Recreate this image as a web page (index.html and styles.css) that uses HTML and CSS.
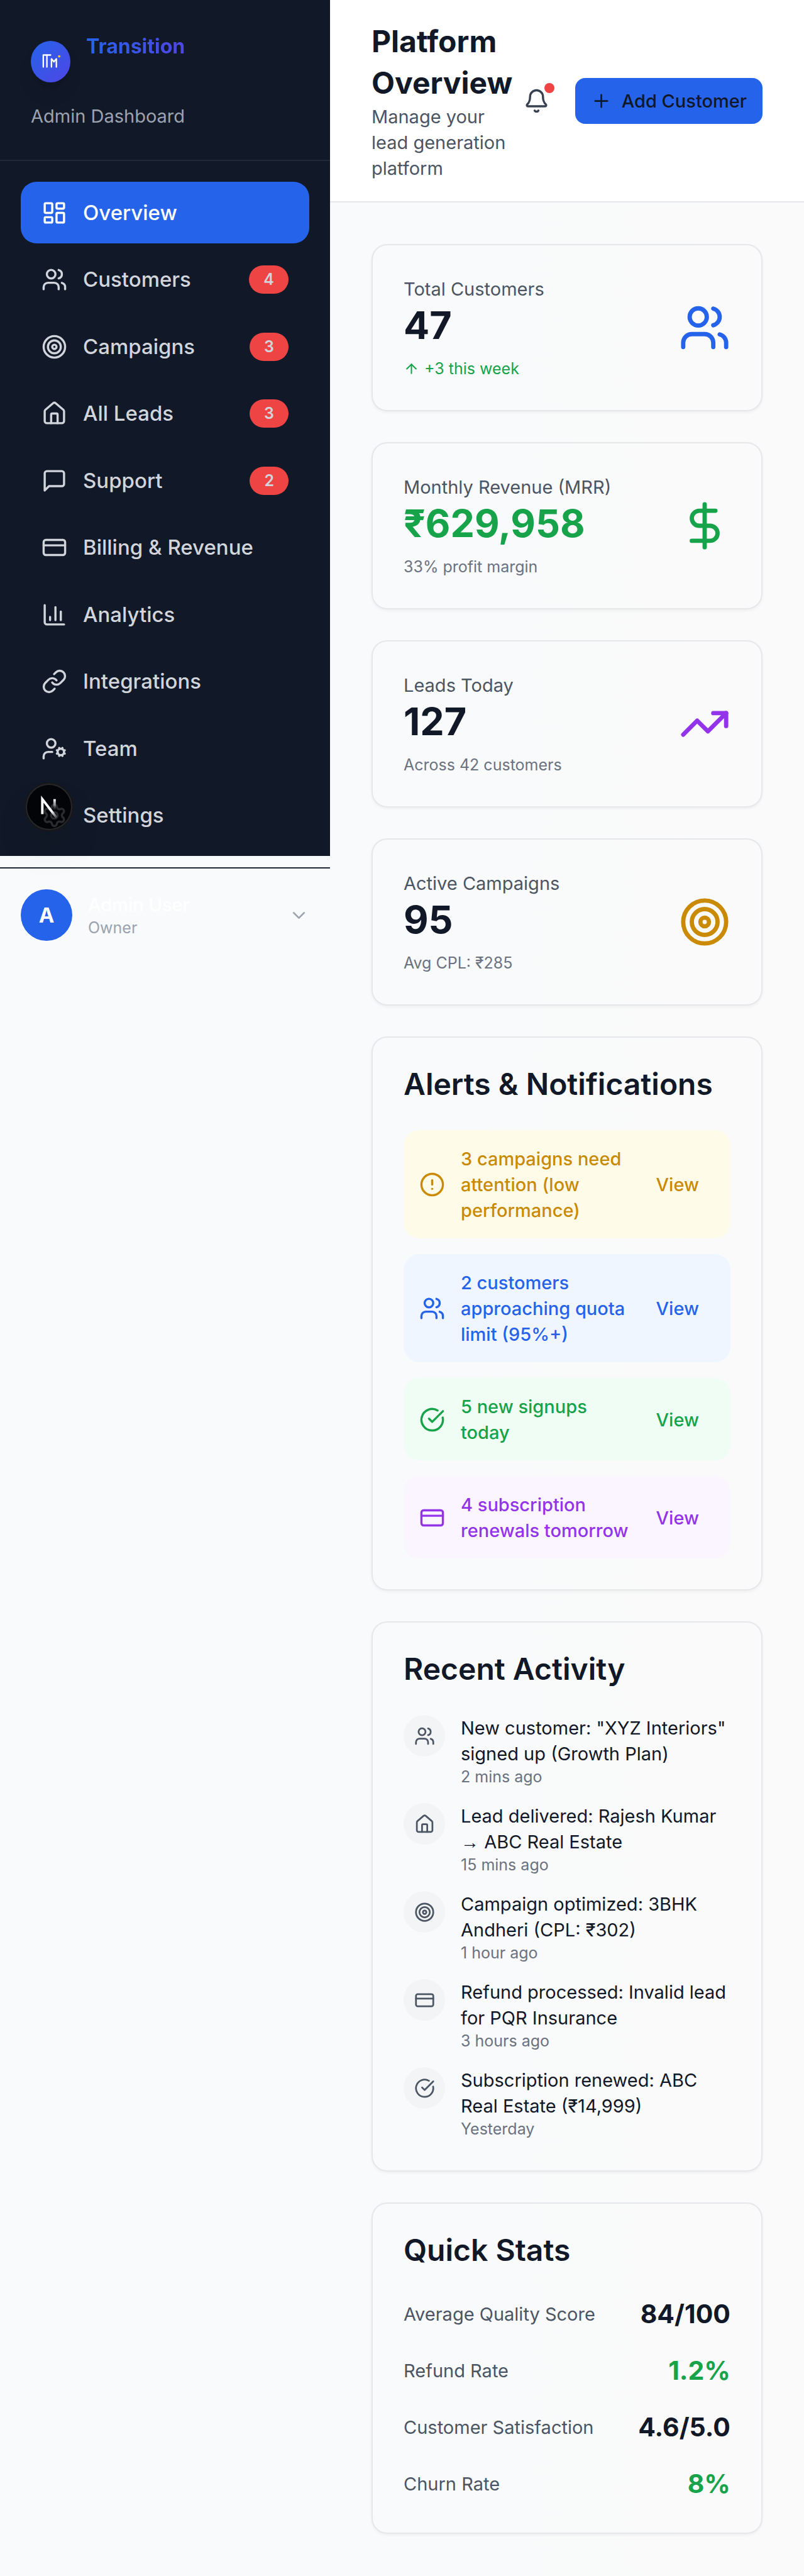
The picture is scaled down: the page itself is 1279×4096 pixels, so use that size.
FILE: index.html
```html
<!DOCTYPE html>
<html lang="en">
<head>
<meta charset="utf-8">
<meta name="viewport" content="width=device-width, initial-scale=1">
<title>Platform Overview</title>
<link rel="stylesheet" href="styles.css">
</head>
<body>
<svg class="sprite" aria-hidden="true">
  <symbol id="dashboard" viewBox="0 0 24 24"><rect x="3" y="3" width="7" height="9" rx="1"/><rect x="14" y="3" width="7" height="5" rx="1"/><rect x="14" y="12" width="7" height="9" rx="1"/><rect x="3" y="16" width="7" height="5" rx="1"/></symbol>
  <symbol id="users" viewBox="0 0 24 24"><path d="M16 21v-2a4 4 0 0 0-4-4H6a4 4 0 0 0-4 4v2"/><path d="M16 3.128a4 4 0 0 1 0 7.744"/><path d="M22 21v-2a4 4 0 0 0-3-3.87"/><circle cx="9" cy="7" r="4"/></symbol>
  <symbol id="target" viewBox="0 0 24 24"><circle cx="12" cy="12" r="10"/><circle cx="12" cy="12" r="6"/><circle cx="12" cy="12" r="2"/></symbol>
  <symbol id="house" viewBox="0 0 24 24"><path d="M15 21v-8a1 1 0 0 0-1-1h-4a1 1 0 0 0-1 1v8"/><path d="M3 10a2 2 0 0 1 .709-1.528l7-5.999a2 2 0 0 1 2.582 0l7 5.999A2 2 0 0 1 21 10v9a2 2 0 0 1-2 2H5a2 2 0 0 1-2-2z"/></symbol>
  <symbol id="message" viewBox="0 0 24 24"><path d="M21 15a2 2 0 0 1-2 2H7l-4 4V5a2 2 0 0 1 2-2h14a2 2 0 0 1 2 2z"/></symbol>
  <symbol id="card" viewBox="0 0 24 24"><rect x="2" y="5" width="20" height="14" rx="2"/><path d="M2 10h20"/></symbol>
  <symbol id="chart" viewBox="0 0 24 24"><path d="M3 3v16a2 2 0 0 0 2 2h16"/><path d="M18 17V9"/><path d="M13 17V5"/><path d="M8 17v-3"/></symbol>
  <symbol id="link" viewBox="0 0 24 24"><path d="M10 13a5 5 0 0 0 7.54.54l3-3a5 5 0 0 0-7.07-7.07l-1.72 1.71"/><path d="M14 11a5 5 0 0 0-7.54-.54l-3 3a5 5 0 0 0 7.07 7.07l1.71-1.71"/></symbol>
  <symbol id="user-cog" viewBox="0 0 24 24"><path d="M10 15H6a4 4 0 0 0-4 4v2"/><path d="m14.305 16.53.923-.382"/><path d="m15.228 13.852-.923-.383"/><path d="m16.852 12.228-.383-.923"/><path d="m16.852 17.772-.383.924"/><path d="m19.148 12.228.383-.923"/><path d="m19.53 18.696-.382-.924"/><path d="m20.772 13.852.924-.383"/><path d="m20.772 16.148.924.383"/><circle cx="18" cy="15" r="3"/><circle cx="9" cy="7" r="4"/></symbol>
  <symbol id="settings" viewBox="0 0 24 24"><path d="M9.671 4.136a2.34 2.34 0 0 1 4.659 0 2.34 2.34 0 0 0 3.319 1.915 2.34 2.34 0 0 1 2.33 4.033 2.34 2.34 0 0 0 0 3.831 2.34 2.34 0 0 1-2.33 4.033 2.34 2.34 0 0 0-3.319 1.915 2.34 2.34 0 0 1-4.659 0 2.34 2.34 0 0 0-3.32-1.915 2.34 2.34 0 0 1-2.33-4.033 2.34 2.34 0 0 0 0-3.831A2.34 2.34 0 0 1 6.35 6.051a2.34 2.34 0 0 0 3.319-1.915"/><circle cx="12" cy="12" r="3"/></symbol>
  <symbol id="bell" viewBox="0 0 24 24"><path d="M10.268 21a2 2 0 0 0 3.464 0"/><path d="M3.262 15.326A1 1 0 0 0 4 17h16a1 1 0 0 0 .74-1.673C19.41 13.956 18 12.499 18 8A6 6 0 0 0 6 8c0 4.499-1.411 5.956-2.738 7.326"/></symbol>
  <symbol id="plus" viewBox="0 0 24 24"><path d="M5 12h14"/><path d="M12 5v14"/></symbol>
  <symbol id="arrow-up" viewBox="0 0 24 24"><path d="m5 12 7-7 7 7"/><path d="M12 19V5"/></symbol>
  <symbol id="dollar" viewBox="0 0 24 24"><path d="M12 2v20"/><path d="M17 5H9.5a3.5 3.5 0 0 0 0 7h5a3.5 3.5 0 0 1 0 7H6"/></symbol>
  <symbol id="trending" viewBox="0 0 24 24"><path d="M16 7h6v6"/><path d="m22 7-8.5 8.5-5-5L2 17"/></symbol>
  <symbol id="alert" viewBox="0 0 24 24"><circle cx="12" cy="12" r="10"/><path d="M12 8v4"/><path d="M12 16h.01"/></symbol>
  <symbol id="check" viewBox="0 0 24 24"><path d="M21.801 10A10 10 0 1 1 17 3.335"/><path d="m9 11 3 3L22 4"/></symbol>
  <symbol id="chevron" viewBox="0 0 24 24"><path d="m6 9 6 6 6-6"/></symbol>
</svg>

<div class="layout">
  <aside class="sidebar">
    <div class="brand">
      <div class="brand-row">
        <span class="brand-logo">
          <svg viewBox="0 0 92 96" aria-hidden="true"><g fill="none" stroke="#fff" stroke-width="3.4" stroke-linecap="round" stroke-linejoin="round"><path d="M29 60.5V32.7H46"/><path d="M37.4 33V60.5"/><path d="M48 60.5V41.5L53.7 48.4L59.4 41.5V60.5"/></g><circle cx="66" cy="35.7" r="2.8" fill="#facc15"/></svg>
        </span>
        <span class="brand-name">Transition</span>
      </div>
      <p class="brand-sub">Admin Dashboard</p>
    </div>
    <nav class="nav" aria-label="Main">
      <a class="nav-item active" href="#" aria-current="page"><svg class="icon"><use href="#dashboard"/></svg>Overview</a>
      <a class="nav-item" href="#"><svg class="icon"><use href="#users"/></svg>Customers<span class="badge">4</span></a>
      <a class="nav-item" href="#"><svg class="icon"><use href="#target"/></svg>Campaigns<span class="badge">3</span></a>
      <a class="nav-item" href="#"><svg class="icon"><use href="#house"/></svg>All Leads<span class="badge">3</span></a>
      <a class="nav-item" href="#"><svg class="icon"><use href="#message"/></svg>Support<span class="badge">2</span></a>
      <a class="nav-item" href="#"><svg class="icon"><use href="#card"/></svg>Billing &amp; Revenue</a>
      <a class="nav-item" href="#"><svg class="icon"><use href="#chart"/></svg>Analytics</a>
      <a class="nav-item" href="#"><svg class="icon"><use href="#link"/></svg>Integrations</a>
      <a class="nav-item" href="#"><svg class="icon"><use href="#user-cog"/></svg>Team</a>
      <a class="nav-item" href="#"><svg class="icon"><use href="#settings"/></svg>Settings</a>
    </nav>
    <button class="profile" type="button">
      <span class="avatar">A</span>
      <span class="profile-text"><span class="profile-name">Admin User</span><span class="profile-role">Owner</span></span>
      <svg class="icon icon-sm"><use href="#chevron"/></svg>
    </button>
    <button class="dev-badge" type="button" aria-label="Developer tools">
      <svg viewBox="0 0 36 36" fill="none" aria-hidden="true">
        <defs>
          <linearGradient id="fade-diagonal" gradientUnits="userSpaceOnUse" x1="20" y1="21" x2="24.6" y2="27"><stop stop-color="#fff"/><stop offset="0.6" stop-color="#fff" stop-opacity="0.5"/><stop offset="1" stop-color="#fff" stop-opacity="0"/></linearGradient>
          <linearGradient id="fade-stem" gradientUnits="userSpaceOnUse" x1="22" y1="12" x2="22" y2="20.5"><stop stop-color="#fff"/><stop offset="1" stop-color="#fff" stop-opacity="0"/></linearGradient>
        </defs>
        <path d="M23.7 26.2 12.8 12v11.6" stroke="url(#fade-diagonal)" stroke-width="1.9"/>
        <path d="M22.3 12v11.6" stroke="url(#fade-stem)" stroke-width="1.9"/>
      </svg>
    </button>
  </aside>

  <div class="page">
    <header class="topbar">
      <div class="topbar-text">
        <h1>Platform Overview</h1>
        <p>Manage your lead generation platform</p>
      </div>
      <button class="bell" type="button" aria-label="Notifications"><svg class="icon"><use href="#bell"/></svg><span class="dot"></span></button>
      <button class="add" type="button"><svg class="icon icon-sm"><use href="#plus"/></svg>Add Customer</button>
    </header>

    <main class="content">
      <section class="card stat">
        <div><h3>Total Customers</h3><p class="stat-value">47</p><p class="stat-note green"><svg class="icon icon-xs"><use href="#arrow-up"/></svg>+3 this week</p></div>
        <svg class="icon icon-lg blue"><use href="#users"/></svg>
      </section>
      <section class="card stat">
        <div><h3>Monthly Revenue (MRR)</h3><p class="stat-value green">₹629,958</p><p class="stat-note">33% profit margin</p></div>
        <svg class="icon icon-lg green"><use href="#dollar"/></svg>
      </section>
      <section class="card stat">
        <div><h3>Leads Today</h3><p class="stat-value">127</p><p class="stat-note">Across 42 customers</p></div>
        <svg class="icon icon-lg purple"><use href="#trending"/></svg>
      </section>
      <section class="card stat">
        <div><h3>Active Campaigns</h3><p class="stat-value">95</p><p class="stat-note">Avg CPL: ₹285</p></div>
        <svg class="icon icon-lg yellow"><use href="#target"/></svg>
      </section>

      <section class="card">
        <h2>Alerts &amp; Notifications</h2>
        <ul class="list">
          <li class="alert alert-yellow yellow"><svg class="icon"><use href="#alert"/></svg><span class="alert-text">3 campaigns need attention (low performance)</span><button class="view" type="button">View</button></li>
          <li class="alert alert-blue blue"><svg class="icon"><use href="#users"/></svg><span class="alert-text">2 customers approaching quota limit (95%+)</span><button class="view" type="button">View</button></li>
          <li class="alert alert-green green"><svg class="icon"><use href="#check"/></svg><span class="alert-text">5 new signups today</span><button class="view" type="button">View</button></li>
          <li class="alert alert-purple purple"><svg class="icon"><use href="#card"/></svg><span class="alert-text">4 subscription renewals tomorrow</span><button class="view" type="button">View</button></li>
        </ul>
      </section>

      <section class="card">
        <h2>Recent Activity</h2>
        <ul class="list">
          <li class="activity"><span class="bubble"><svg class="icon icon-sm"><use href="#users"/></svg></span><div><p>New customer: "XYZ Interiors" signed up (Growth Plan)</p><p class="time">2 mins ago</p></div></li>
          <li class="activity"><span class="bubble"><svg class="icon icon-sm"><use href="#house"/></svg></span><div><p>Lead delivered: Rajesh Kumar <span class="arrow">→</span> ABC Real Estate</p><p class="time">15 mins ago</p></div></li>
          <li class="activity"><span class="bubble"><svg class="icon icon-sm"><use href="#target"/></svg></span><div><p>Campaign optimized: 3BHK Andheri (CPL: ₹302)</p><p class="time">1 hour ago</p></div></li>
          <li class="activity"><span class="bubble"><svg class="icon icon-sm"><use href="#card"/></svg></span><div><p>Refund processed: Invalid lead for PQR Insurance</p><p class="time">3 hours ago</p></div></li>
          <li class="activity"><span class="bubble"><svg class="icon icon-sm"><use href="#check"/></svg></span><div><p>Subscription renewed: ABC Real Estate (₹14,999)</p><p class="time">Yesterday</p></div></li>
        </ul>
      </section>

      <section class="card">
        <h2>Quick Stats</h2>
        <dl class="metrics">
          <div><dt>Average Quality Score</dt><dd>84/100</dd></div>
          <div><dt>Refund Rate</dt><dd class="green">1.2%</dd></div>
          <div><dt>Customer Satisfaction</dt><dd>4.6/5.0</dd></div>
          <div><dt>Churn Rate</dt><dd class="green">8%</dd></div>
        </dl>
      </section>
    </main>
  </div>
</div>
</body>
</html>
```
FILE: styles.css
```css
*, *::before, *::after { box-sizing: border-box; }

body {
  margin: 0;
  font-family: Inter, "Liberation Sans", sans-serif;
  font-size: 29px;
  line-height: 41px;
  color: #111827;
  background: linear-gradient(to right, #f8fafc, #fafafa);
}

h1, h2, h3, p, ul, dl, dd { margin: 0; padding: 0; }
ul { list-style: none; }
button { border: 0; padding: 0; background: none; font: inherit; color: inherit; text-align: left; cursor: pointer; }
a { color: inherit; text-decoration: none; }

.sprite { position: absolute; width: 0; height: 0; }

.icon {
  flex: none;
  width: 41px;
  height: 41px;
  fill: none;
  stroke: currentColor;
  stroke-width: 2;
  stroke-linecap: round;
  stroke-linejoin: round;
}
.icon-xs { width: 25px; height: 25px; }
.icon-sm { width: 33px; height: 33px; }
.icon-lg { width: 82px; height: 82px; }

.layout { display: flex; align-items: flex-start; }

/* Sidebar: the dark panel is one screen tall, the profile row runs past it */
.sidebar {
  position: relative;
  flex: none;
  width: 525px;
  height: 1361px;
  background: #111827;
}

.brand { padding: 49px; border-bottom: 2px solid #1f2937; }
.brand-row { display: flex; align-items: center; gap: 25px; height: 98px; }
.brand-logo {
  flex: none;
  width: 63px;
  height: 66px;
  border-radius: 50%;
  background: linear-gradient(135deg, #2563eb, #4f46e5);
  box-shadow: 0 20px 30px -6px rgba(0, 0, 0, 0.1), 0 8px 12px -8px rgba(0, 0, 0, 0.1);
}
.brand-logo svg { display: block; width: 100%; height: 100%; }
.brand-name {
  align-self: flex-start;
  font-size: 32px;
  line-height: 49px;
  font-weight: 700;
  color: transparent;
  background: linear-gradient(to right, #2563eb, #4f46e5);
  -webkit-background-clip: text;
  background-clip: text;
}
.brand-sub { margin-top: 17px; color: #9ca3af; }

.nav {
  display: flex;
  flex-direction: column;
  justify-content: space-between;
  min-height: 1123px;
  padding: 33px;
}
.nav-item {
  display: flex;
  align-items: center;
  gap: 25px;
  height: 98px;
  padding: 0 33px;
  border-radius: 25px;
  font-size: 33px;
  line-height: 49px;
  font-weight: 500;
  color: #d1d5db;
}
.nav-item.active { background: #2563eb; color: #fff; }
.badge {
  margin-left: auto;
  padding: 6px 23px;
  border-radius: 23px;
  background: #ef4444;
  font-size: 25px;
  line-height: 33px;
  font-weight: 600;
}

.profile {
  display: flex;
  align-items: center;
  gap: 25px;
  width: 100%;
  padding: 33px;
  border-top: 2px solid #1f2937;
  color: #9ca3af;
}
.avatar {
  display: grid;
  place-items: center;
  width: 82px;
  height: 82px;
  border-radius: 50%;
  background: #2563eb;
  color: #fff;
  font-size: 33px;
  font-weight: 700;
}
.profile-text { flex: 1; display: flex; flex-direction: column; }
.profile-name { color: #fff; font-weight: 500; }
.profile-role { font-size: 25px; line-height: 33px; }

/* Floating badge over the last menu entry */
.dev-badge {
  position: absolute;
  left: 41px;
  bottom: 41px;
  width: 74px;
  height: 74px;
  border-radius: 50%;
  background: rgba(0, 0, 0, 0.8);
  box-shadow: 0 0 0 2px #171717, inset 0 0 0 2px rgba(255, 255, 255, 0.14), 0 33px 66px -16px rgba(0, 0, 0, 0.24);
}
.dev-badge svg { display: block; width: 100%; height: 100%; }

.page { flex: 1; min-width: 0; }

.topbar {
  display: flex;
  align-items: center;
  padding: 33px 66px 32px;
  border-bottom: 2px solid #e5e7eb;
  background: #fff;
}
.topbar-text { flex: 1; color: #4b5563; }
h1 { font-size: 48px; line-height: 66px; font-weight: 700; color: #111827; }
.bell { position: relative; flex: none; display: grid; padding: 16px; color: #374151; }
.dot {
  position: absolute;
  top: 8px;
  right: 8px;
  width: 16px;
  height: 16px;
  border-radius: 50%;
  background: #ef4444;
}
.add {
  flex: none;
  display: flex;
  align-items: center;
  gap: 16px;
  margin-left: 25px;
  padding: 16px 25px;
  border-radius: 16px;
  background: #2563eb;
  font-weight: 500;
  white-space: nowrap;
}

.content { display: flex; flex-direction: column; gap: 49px; padding: 66px; }

.card {
  padding: 49px;
  border: 2px solid #e5e7eb;
  border-radius: 25px;
  box-shadow: 0 2px 4px rgba(0, 0, 0, 0.05);
}
h2 { margin-bottom: 49px; font-size: 48px; line-height: 49px; font-weight: 600; }

.stat { display: flex; align-items: center; justify-content: space-between; }
h3 { font-size: 29px; font-weight: 400; color: #4b5563; }
.stat-value { font-size: 61px; line-height: 74px; font-weight: 700; }
.stat-note {
  display: flex;
  align-items: center;
  gap: 8px;
  margin-top: 16px;
  font-size: 25px;
  line-height: 33px;
  color: #6b7280;
}

.list { display: flex; flex-direction: column; gap: 25px; }

.alert {
  display: flex;
  align-items: center;
  gap: 25px;
  padding: 25px 25px 24px;
  border-radius: 25px;
  font-weight: 500;
}
.alert-text { flex: 1; }
.view { margin-left: -12px; padding: 16px 25px; }
.alert-yellow { background: #fefce8; }
.alert-blue { background: #eff6ff; }
.alert-green { background: #f0fdf4; }
.alert-purple { background: #faf5ff; }

.activity { display: flex; align-items: flex-start; gap: 25px; }
.bubble {
  flex: none;
  display: grid;
  place-items: center;
  width: 66px;
  height: 66px;
  border-radius: 50%;
  background: #f3f4f6;
  color: #4b5563;
}
.activity .time { font-size: 25px; line-height: 33px; color: #6b7280; }
.arrow { font-family: "Liberation Sans", sans-serif; line-height: 1; }

.metrics { display: flex; flex-direction: column; gap: 33px; }
.metrics div { display: flex; align-items: center; justify-content: space-between; }
.metrics dt { color: #4b5563; }
.metrics dd { font-size: 41px; line-height: 57px; font-weight: 700; }

.blue { color: #2563eb; }
.yellow { color: #ca8a04; }
.purple { color: #9333ea; }
.green { color: #16a34a; }
.stat-note.green { color: #16a34a; }
```
